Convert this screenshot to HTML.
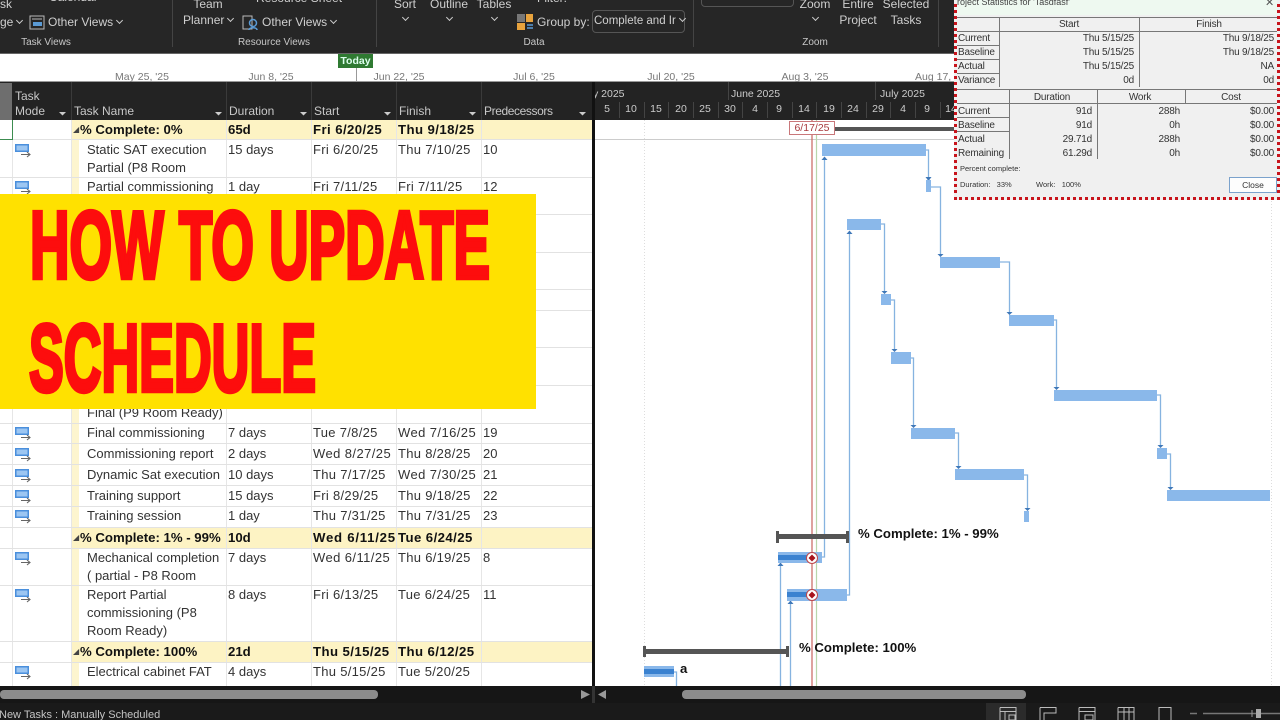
<!DOCTYPE html>
<html><head><meta charset="utf-8"><title>How to update schedule</title>
<style>
html,body{margin:0;padding:0;width:1280px;height:720px;overflow:hidden;background:#fff}
body{position:relative;font-family:"Liberation Sans",sans-serif;font-size:13px;color:#333;filter:blur(.35px)}
div{position:absolute;box-sizing:border-box}
.t{white-space:nowrap;line-height:18px;height:18px}
.c{transform:translateX(-50%)}
.r{color:#cfcfcf;font-size:12px}
.b{font-weight:bold;color:#111;font-size:13.2px}
.d{letter-spacing:.3px}
.k{letter-spacing:.42px}
.w{letter-spacing:.75px}
.h{color:#c8c8c8;font-size:12px}
.f{color:#c8c8c8;font-size:10px}
.l{left:0;width:592px;height:1px;background:#e2e2e2}
.v{width:1px;background:#e6e6e6;top:120px;height:566px}
.y{left:72px;width:520px;background:#fdf3c4}
.s{font-size:10px;letter-spacing:-.2px;color:#333;text-align:right;line-height:14px;height:14px;white-space:nowrap}
.g{color:#777;font-size:10.5px}
.n{color:#ccc;font-size:10.5px}
i.cv{display:inline-block;width:4px;height:4px;border-right:1px solid #ccc;border-bottom:1px solid #ccc;transform:rotate(45deg);margin:0 0 3px 4px}
</style></head><body>
<svg width="0" height="0" style="position:absolute"><defs>
<symbol id="m" viewBox="0 0 16 14"><rect x="0" y="0" width="14" height="8" fill="#4a8fdc"/><rect x="1.500" y="1.500" width="11" height="5" fill="#9cc6f2"/><path d="M6 10.500H15M12 8l3 2.500-3 2.500" fill="none" stroke="#666" stroke-width="1.100"/></symbol>
</defs></svg>

<!-- ribbon -->
<div style="left:0;top:0;width:1280px;height:53px;background:#262626"></div>
<div style="left:0;top:53px;width:1280px;height:1px;background:#666"></div>
<div class="t r" style="left:0;top:-5px">sk</div>
<div class="t r" style="left:0;top:13px">ge<i class="cv"></i></div>
<div class="t r" style="left:49px;top:-12px">Calendar</div>
<svg style="position:absolute;left:29px;top:15px" width="16" height="15"><rect x="1" y="1" width="14" height="13" fill="none" stroke="#bbb"/><rect x="4" y="7" width="9" height="4" fill="#5b9bd5"/><path d="M3 4H13" stroke="#bbb"/></svg>
<div class="t r" style="left:48px;top:13px">Other Views<i class="cv"></i></div>
<div class="t f c" style="left:46px;top:34px">Task Views</div>
<div style="left:172px;top:0;width:1px;height:47px;background:#444"></div>
<div class="t r c" style="left:208px;top:-5px">Team</div>
<div class="t r" style="left:183px;top:11px">Planner<i class="cv"></i></div>
<div class="t r" style="left:256px;top:-11px">Resource Sheet</div>
<svg style="position:absolute;left:242px;top:15px" width="17" height="16"><rect x="1" y="1" width="9" height="13" fill="none" stroke="#bbb"/><circle cx="11" cy="8" r="3.500" fill="none" stroke="#5b9bd5" stroke-width="1.500"/><path d="M7 15c0-3 8-3 8 0" fill="none" stroke="#5b9bd5" stroke-width="1.500"/></svg>
<div class="t r" style="left:262px;top:13px">Other Views<i class="cv"></i></div>
<div class="t f c" style="left:274px;top:34px">Resource Views</div>
<div style="left:376px;top:0;width:1px;height:47px;background:#444"></div>
<div class="t r c" style="left:405px;top:-5px">Sort</div><div class="t r" style="left:399px;top:10px"><i class="cv"></i></div>
<div class="t r c" style="left:449px;top:-5px">Outline</div><div class="t r" style="left:443px;top:10px"><i class="cv"></i></div>
<div class="t r c" style="left:494px;top:-5px">Tables</div><div class="t r" style="left:488px;top:10px"><i class="cv"></i></div>
<div class="t r" style="left:537px;top:-11px">Filter:</div>
<svg style="position:absolute;left:517px;top:14px" width="17" height="17"><rect x="0" y="0" width="8" height="8" fill="#777"/><rect x="9" y="0" width="7" height="8" fill="#e8a33d"/><rect x="0" y="9" width="8" height="7" fill="#e8a33d"/><path d="M10 11H16M10 14H16" stroke="#5b9bd5" stroke-width="1.500"/></svg>
<div class="t r" style="left:537px;top:13px">Group by:</div>
<div style="left:592px;top:10px;width:93px;height:23px;border:1px solid #555;border-radius:4px"></div>
<div class="t r" style="left:594px;top:12px;font-size:11.500px">Complete and Ir<i class="cv"></i></div>
<div style="left:701px;top:-10px;width:93px;height:17px;border:1px solid #555;border-radius:4px"></div>
<div style="left:693px;top:0;width:1px;height:47px;background:#444"></div>
<div class="t f c" style="left:534px;top:34px">Data</div>
<div class="t r c" style="left:815px;top:-5px">Zoom</div><div class="t r" style="left:809px;top:10px"><i class="cv"></i></div>
<div class="t r c" style="left:858px;top:-5px">Entire</div><div class="t r c" style="left:858px;top:11px">Project</div>
<div class="t r c" style="left:906px;top:-5px">Selected</div><div class="t r c" style="left:906px;top:11px">Tasks</div>
<div class="t f c" style="left:815px;top:34px">Zoom</div>
<div style="left:938px;top:0;width:1px;height:47px;background:#444"></div>

<!-- timeline -->
<div style="left:0;top:54px;width:1280px;height:28px;background:#fff"></div>
<div style="left:0;top:81px;width:1280px;height:1px;background:#999"></div>
<div style="left:356px;top:68px;width:1px;height:14px;background:#999"></div>
<div style="left:338px;top:54px;width:35px;height:14px;background:#2f7a32;color:#dfe;font-size:10.500px;font-weight:bold;text-align:center;line-height:14px">Today</div>
<div class="t g c" style="left:142px;top:68px">May 25, '25</div>
<div class="t g c" style="left:271px;top:68px">Jun 8, '25</div>
<div class="t g c" style="left:399px;top:68px">Jun 22, '25</div>
<div class="t g c" style="left:534px;top:68px">Jul 6, '25</div>
<div class="t g c" style="left:671px;top:68px">Jul 20, '25</div>
<div class="t g c" style="left:805px;top:68px">Aug 3, '25</div>
<div class="t g" style="left:915px;top:68px">Aug 17,</div>

<!-- table header -->
<div style="left:0;top:82px;width:1280px;height:38px;background:#232323"></div>
<div style="left:0;top:83px;width:12px;height:37px;background:#6e6e6e"></div>
<div class="t h" style="left:15px;top:87px">Task</div>
<div class="t h" style="left:15px;top:102px">Mode</div>
<div class="t h" style="left:74px;top:102px">Task Name</div>
<div class="t h" style="left:229px;top:102px">Duration</div>
<div class="t h" style="left:314px;top:102px">Start</div>
<div class="t h" style="left:399px;top:102px">Finish</div>
<div class="t h" style="left:484px;top:102px;letter-spacing:-.4px">Predecessors</div>
<svg style="position:absolute;left:0;top:82px" width="595" height="38"><g fill="#ccc"><path d="M59 30h7l-3.500 3.500zM215 30h7l-3.500 3.500zM300 30h7l-3.500 3.500zM384 30h7l-3.500 3.500zM469 30h7l-3.500 3.500zM579 30h7l-3.500 3.500z"/></g><g stroke="#3a3a3a"><path d="M71.500 0V38M226.500 0V38M311.500 0V38M396.500 0V38M481.500 0V38"/></g></svg>

<!-- gantt header -->
<div class="t n" style="left:593px;top:85px">y 2025</div>
<div class="t n" style="left:731px;top:85px">June 2025</div>
<div class="t n" style="left:880px;top:85px">July 2025</div>
<svg style="position:absolute;left:595px;top:82px" width="360" height="38"><g stroke="#444"><path d="M133.500 0V18M280.500 0V18M24.500 20V36M49.500 20V36M73.500 20V36M98.500 20V36M123.500 20V36M147.500 20V36M172.500 20V36M197.500 20V36M221.500 20V36M246.500 20V36M271.500 20V36M295.500 20V36M320.500 20V36M345.500 20V36"/></g></svg>
<div class="t n c" style="left:607px;top:100px">5</div><div class="t n c" style="left:631px;top:100px">10</div><div class="t n c" style="left:656px;top:100px">15</div><div class="t n c" style="left:681px;top:100px">20</div><div class="t n c" style="left:705px;top:100px">25</div><div class="t n c" style="left:730px;top:100px">30</div><div class="t n c" style="left:755px;top:100px">4</div><div class="t n c" style="left:779px;top:100px">9</div><div class="t n c" style="left:804px;top:100px">14</div><div class="t n c" style="left:829px;top:100px">19</div><div class="t n c" style="left:853px;top:100px">24</div><div class="t n c" style="left:878px;top:100px">29</div><div class="t n c" style="left:903px;top:100px">4</div><div class="t n c" style="left:927px;top:100px">9</div><div class="t n c" style="left:951px;top:100px">14</div>

<!-- table grid -->
<div class="y" style="top:120px;height:19px"></div>
<div class="y" style="top:527px;height:21px"></div>
<div class="y" style="top:641px;height:21px"></div>
<div style="left:72px;top:139px;width:7px;height:388px;background:#fdf5cf"></div>
<div style="left:72px;top:548px;width:7px;height:93px;background:#fdf5cf"></div>
<div style="left:72px;top:662px;width:7px;height:24px;background:#fdf5cf"></div>
<div class="v" style="left:12px"></div><div class="v" style="left:71px"></div><div class="v" style="left:226px"></div><div class="v" style="left:311px"></div><div class="v" style="left:396px"></div><div class="v" style="left:481px"></div>
<div class="l" style="top:139px"></div><div class="l" style="top:177px"></div><div class="l" style="top:214px"></div><div class="l" style="top:252px"></div><div class="l" style="top:289px"></div><div class="l" style="top:310px"></div><div class="l" style="top:347px"></div><div class="l" style="top:385px"></div><div class="l" style="top:423px"></div><div class="l" style="top:443px"></div><div class="l" style="top:464px"></div><div class="l" style="top:485px"></div><div class="l" style="top:506px"></div><div class="l" style="top:527px"></div><div class="l" style="top:548px"></div><div class="l" style="top:585px"></div><div class="l" style="top:641px"></div><div class="l" style="top:662px"></div>
<div style="left:0;top:120px;width:13px;height:20px;border-right:1px solid #3c8c50;border-bottom:1px solid #3c8c50"></div>
<div style="left:592px;top:82px;width:3px;height:621px;background:#111"></div>

<!-- rows -->
<div class="t" style="left:73px;top:121px;font-size:8px;color:#444">◢</div>
<div class="t b" style="left:80px;top:121px">% Complete: 0%</div><div class="t b" style="left:228px;top:121px">65d</div><div class="t b k" style="left:313px;top:121px">Fri 6/20/25</div><div class="t b k" style="left:398px;top:121px">Thu 9/18/25</div>
<svg style="position:absolute;left:15px;top:144px" width="16" height="14"><use href="#m"/></svg>
<div class="t" style="left:87px;top:141px">Static SAT execution</div><div class="t" style="left:87px;top:159px">Partial (P8 Room</div><div class="t" style="left:228px;top:141px">15 days</div><div class="t d" style="left:313px;top:141px">Fri 6/20/25</div><div class="t d" style="left:398px;top:141px">Thu 7/10/25</div><div class="t" style="left:483px;top:141px">10</div>
<svg style="position:absolute;left:15px;top:181px" width="16" height="14"><use href="#m"/></svg>
<div class="t" style="left:87px;top:178px">Partial commissioning</div><div class="t" style="left:228px;top:178px">1 day</div><div class="t d" style="left:313px;top:178px">Fri 7/11/25</div><div class="t d" style="left:398px;top:178px">Fri 7/11/25</div><div class="t" style="left:483px;top:178px">12</div>
<div class="t" style="left:87px;top:404px">Final (P9 Room Ready)</div>

<svg style="position:absolute;left:15px;top:427px" width="16" height="14"><use href="#m"/></svg>
<div class="t" style="left:87px;top:424px">Final commissioning</div><div class="t" style="left:228px;top:424px">7 days</div><div class="t d" style="left:313px;top:424px">Tue 7/8/25</div><div class="t k" style="left:398px;top:424px">Wed 7/16/25</div><div class="t" style="left:483px;top:424px">19</div>
<svg style="position:absolute;left:15px;top:448px" width="16" height="14"><use href="#m"/></svg>
<div class="t" style="left:87px;top:445px">Commissioning report</div><div class="t" style="left:228px;top:445px">2 days</div><div class="t k" style="left:313px;top:445px">Wed 8/27/25</div><div class="t d" style="left:398px;top:445px">Thu 8/28/25</div><div class="t" style="left:483px;top:445px">20</div>
<svg style="position:absolute;left:15px;top:469px" width="16" height="14"><use href="#m"/></svg>
<div class="t" style="left:87px;top:466px">Dynamic Sat execution</div><div class="t" style="left:228px;top:466px">10 days</div><div class="t d" style="left:313px;top:466px">Thu 7/17/25</div><div class="t k" style="left:398px;top:466px">Wed 7/30/25</div><div class="t" style="left:483px;top:466px">21</div>
<svg style="position:absolute;left:15px;top:490px" width="16" height="14"><use href="#m"/></svg>
<div class="t" style="left:87px;top:487px">Training support</div><div class="t" style="left:228px;top:487px">15 days</div><div class="t d" style="left:313px;top:487px">Fri 8/29/25</div><div class="t d" style="left:398px;top:487px">Thu 9/18/25</div><div class="t" style="left:483px;top:487px">22</div>
<svg style="position:absolute;left:15px;top:510px" width="16" height="14"><use href="#m"/></svg>
<div class="t" style="left:87px;top:507px">Training session</div><div class="t" style="left:228px;top:507px">1 day</div><div class="t d" style="left:313px;top:507px">Thu 7/31/25</div><div class="t d" style="left:398px;top:507px">Thu 7/31/25</div><div class="t" style="left:483px;top:507px">23</div>
<div class="t" style="left:73px;top:529px;font-size:8px;color:#444">◢</div>
<div class="t b" style="left:80px;top:529px">% Complete: 1% - 99%</div><div class="t b" style="left:228px;top:529px">10d</div><div class="t b w" style="left:313px;top:529px">Wed 6/11/25</div><div class="t b k" style="left:398px;top:529px">Tue 6/24/25</div>
<svg style="position:absolute;left:15px;top:552px" width="16" height="14"><use href="#m"/></svg>
<div class="t" style="left:87px;top:549px">Mechanical completion</div><div class="t" style="left:87px;top:567px">( partial - P8 Room</div><div class="t" style="left:228px;top:549px">7 days</div><div class="t k" style="left:313px;top:549px">Wed 6/11/25</div><div class="t d" style="left:398px;top:549px">Thu 6/19/25</div><div class="t" style="left:483px;top:549px">8</div>
<svg style="position:absolute;left:15px;top:589px" width="16" height="14"><use href="#m"/></svg>
<div class="t" style="left:87px;top:586px">Report Partial</div><div class="t" style="left:87px;top:604px">commissioning (P8</div><div class="t" style="left:87px;top:622px">Room Ready)</div><div class="t" style="left:228px;top:586px">8 days</div><div class="t d" style="left:313px;top:586px">Fri 6/13/25</div><div class="t d" style="left:398px;top:586px">Tue 6/24/25</div><div class="t" style="left:483px;top:586px">11</div>
<div class="t" style="left:73px;top:643px;font-size:8px;color:#444">◢</div>
<div class="t b" style="left:80px;top:643px">% Complete: 100%</div><div class="t b" style="left:228px;top:643px">21d</div><div class="t b k" style="left:313px;top:643px">Thu 5/15/25</div><div class="t b k" style="left:398px;top:643px">Thu 6/12/25</div>
<svg style="position:absolute;left:15px;top:666px" width="16" height="14"><use href="#m"/></svg>
<div class="t" style="left:87px;top:663px">Electrical cabinet FAT</div><div class="t" style="left:228px;top:663px">4 days</div><div class="t d" style="left:313px;top:663px">Thu 5/15/25</div><div class="t d" style="left:398px;top:663px">Tue 5/20/25</div>

<!-- gantt -->
<svg style="position:absolute;left:0;top:0" width="1280" height="720">
<g stroke="#ddd" stroke-dasharray="1 2"><path d="M644.500 120V686M1271.500 120V686"/></g>
<path d="M595 139.500H1280" stroke="#ccc"/>
<path d="M812 120V686" stroke="#c9655f" stroke-width="1.200"/>
<path d="M816.500 120V686" stroke="#b9d6ac" stroke-width="1.200"/>
<g fill="none" stroke="#86b3e0" stroke-width="1.300">
<path d="M926 150H928.500V178M931 187H940.500V254M881 224H884.500V291M1000 262H1009.500V312M891 300H894.500V349M1054 320H1056.500V387M911 358H913.500V425M1157 395H1160.500V445M955 433H958.500V466M1167 454H1170.500V487M1024 475H1027.500V508"/>
<path d="M822 557H824.500V158M847 595H849.500V233M780.500 686V566M790.500 686V604M674 672H676.500V686"/>
</g>
<g fill="#3f78b8">
<path d="M925.500 177h6l-3 4zM937.500 254h6l-3 3zM881.500 291h6l-3 3zM1006.500 312h6l-3 3zM891.500 349h6l-3 3zM1053.500 387h6l-3 3zM910.500 425h6l-3 3zM1157.500 445h6l-3 3zM955.500 466h6l-3 3zM1167.500 487h6l-3 3zM1024.500 508h6l-3 3z"/>
<path d="M821.500 160h6l-3-3.500zM846.500 234h6l-3-3.500zM777.500 566h6l-3-3.500zM787.500 604h6l-3-3.500z"/>
</g>
<g fill="#8ab8ea">
<rect x="822" y="144" width="104" height="12"/><rect x="926" y="180" width="5" height="12"/><rect x="847" y="219" width="34" height="11"/><rect x="940" y="257" width="60" height="11"/><rect x="881" y="294" width="10" height="11"/><rect x="1009" y="315" width="45" height="11"/><rect x="891" y="352" width="20" height="12"/><rect x="1054" y="390" width="103" height="11"/><rect x="911" y="428" width="44" height="11"/><rect x="1157" y="448" width="10" height="11"/><rect x="955" y="469" width="69" height="11"/><rect x="1167" y="490" width="103" height="11"/><rect x="1024" y="511" width="5" height="11"/>
<rect x="778" y="552" width="44" height="11"/><rect x="787" y="589" width="60" height="12"/><rect x="644" y="666" width="30" height="11"/>
</g>
<g fill="#3b82d0"><rect x="778" y="555" width="30" height="5"/><rect x="787" y="592" width="21" height="5"/><rect x="644" y="669" width="30" height="5"/></g>
<g fill="#fff" stroke="#c0474a"><circle cx="812" cy="558" r="5.500"/><circle cx="812" cy="595" r="5.500"/></g>
<g fill="#a8131c"><path d="M812 554.500l3.500 3.500-3.500 3.500-3.500-3.500zM812 591.500l3.500 3.500-3.500 3.500-3.500-3.500z"/></g>
<g fill="#555"><rect x="835" y="127" width="120" height="4"/><rect x="777" y="534" width="70" height="5"/><rect x="776" y="531" width="3" height="12"/><rect x="846" y="531" width="3" height="12"/><rect x="644" y="649" width="144" height="5"/><rect x="643" y="646" width="3" height="11"/><rect x="786" y="646" width="3" height="11"/></g>
</svg>
<div style="left:789px;top:121px;width:46px;height:14px;background:#fff;border:1px solid #c9777a;color:#a83a3e;font-size:10.500px;text-align:center;line-height:13px">6/17/25</div>
<div class="t b" style="left:858px;top:525px">% Complete: 1% - 99%</div>
<div class="t b" style="left:799px;top:639px">% Complete: 100%</div>
<div class="t b" style="left:680px;top:660px">a</div>

<!-- dialog -->
<div style="left:954px;top:-3px;width:326px;height:203px;background:#f0f0f0;border:3px dotted #c8141c"></div>
<div style="left:957px;top:0;width:320px;height:15px;background:#eef9f0"></div>
<div class="t" style="left:957px;top:-7px;font-size:9px;color:#444;width:120px;overflow:hidden">roject Statistics for 'Tasdfasf'</div>
<div class="t" style="left:1265px;top:-6px;font-size:11px;color:#555">✕</div>
<svg style="position:absolute;left:957px;top:0" width="320" height="165"><g stroke="#777" fill="none"><path d="M0 17.500H320M0 31.500H320M0 45.500H42M0 59.500H42M0 73.500H42M42.500 17V87M182.500 17V87M0 89.500H320M0 103.500H320M0 117.500H52M0 131.500H52M52.500 89V159M140.500 89V159M228.500 89V103"/></g></svg>
<div class="s c" style="left:1069px;top:18px">Start</div><div class="s c" style="left:1209px;top:18px">Finish</div>
<div class="s" style="left:958px;top:32px">Current</div><div class="s" style="left:958px;top:46px">Baseline</div><div class="s" style="left:958px;top:60px">Actual</div><div class="s" style="left:958px;top:74px">Variance</div>
<div class="s" style="right:146px;top:32px">Thu 5/15/25</div><div class="s" style="right:146px;top:46px">Thu 5/15/25</div><div class="s" style="right:146px;top:60px">Thu 5/15/25</div><div class="s" style="right:146px;top:74px">0d</div>
<div class="s" style="right:6px;top:32px">Thu 9/18/25</div><div class="s" style="right:6px;top:46px">Thu 9/18/25</div><div class="s" style="right:6px;top:60px">NA</div><div class="s" style="right:6px;top:74px">0d</div>
<div class="s c" style="left:1052px;top:91px">Duration</div><div class="s c" style="left:1140px;top:91px">Work</div><div class="s c" style="left:1231px;top:91px">Cost</div>
<div class="s" style="left:958px;top:105px">Current</div><div class="s" style="left:958px;top:119px">Baseline</div><div class="s" style="left:958px;top:133px">Actual</div><div class="s" style="left:958px;top:147px">Remaining</div>
<div class="s" style="right:188px;top:105px">91d</div><div class="s" style="right:188px;top:119px">91d</div><div class="s" style="right:188px;top:133px">29.71d</div><div class="s" style="right:188px;top:147px">61.29d</div>
<div class="s" style="right:100px;top:105px">288h</div><div class="s" style="right:100px;top:119px">0h</div><div class="s" style="right:100px;top:133px">288h</div><div class="s" style="right:100px;top:147px">0h</div>
<div class="s" style="right:6px;top:105px">$0.00</div><div class="s" style="right:6px;top:119px">$0.00</div><div class="s" style="right:6px;top:133px">$0.00</div><div class="s" style="right:6px;top:147px">$0.00</div>
<div class="s" style="left:960px;top:162px;font-size:7.500px;letter-spacing:0">Percent complete:</div>
<div class="s" style="left:960px;top:178px;font-size:7.500px;letter-spacing:0">Duration:&nbsp;&nbsp; 33%</div>
<div class="s" style="left:1036px;top:178px;font-size:7.500px;letter-spacing:0">Work:&nbsp;&nbsp; 100%</div>
<div style="left:1229px;top:177px;width:48px;height:16px;background:#fdfdfd;border:1px solid #7ba2cc;font-size:8.500px;text-align:center;line-height:15px;color:#333">Close</div>

<!-- banner -->
<div style="left:0;top:194px;width:536px;height:215px;background:#ffe100"></div>
<svg style="position:absolute;left:0;top:194px" width="536" height="215">
<text x="30" y="84" font-family="Liberation Sans,sans-serif" font-weight="bold" font-size="96" fill="#fd0d0d" stroke="#fd0d0d" stroke-width="4.500" textLength="460" lengthAdjust="spacingAndGlyphs">HOW TO UPDATE</text>
<text x="29" y="197" font-family="Liberation Sans,sans-serif" font-weight="bold" font-size="96" fill="#fd0d0d" stroke="#fd0d0d" stroke-width="4.500" textLength="287" lengthAdjust="spacingAndGlyphs">SCHEDULE</text>
</svg>

<!-- scrollbars + status -->
<div style="left:0;top:686px;width:1280px;height:17px;background:#161616"></div>
<div style="left:592px;top:686px;width:3px;height:17px;background:#333"></div>
<div style="left:0;top:690px;width:378px;height:9px;background:#8c8c8c;border-radius:4px"></div>
<div style="left:682px;top:690px;width:344px;height:9px;background:#8c8c8c;border-radius:4px"></div>
<svg style="position:absolute;left:578px;top:686px" width="32" height="17"><path d="M3 4l9 4.500-9 4.500zM28 4l-8 4.500 8 4.500z" fill="#999"/></svg>
<div style="left:0;top:703px;width:1280px;height:17px;background:#1a1a1a"></div>
<div class="t" style="left:-1px;top:706px;font-size:11px;color:#c4c4c4">New Tasks : Manually Scheduled</div>
<div style="left:986px;top:703px;width:40px;height:17px;background:#2b2b2b"></div>
<svg style="position:absolute;left:995px;top:705px" width="285" height="15"><g fill="none" stroke="#bbb"><path d="M5 2.500H21V15M5 2.500V15M5 6.500H21M10 6.500V15M14 10h6v5h-6z"/><path d="M45 2.500H61V8H49V15M45 2.500V15"/><path d="M84 2.500H100V15M84 2.500V15M84 6.500H100M90 10h8v5h-8z"/><path d="M123 2.500H139V15M123 2.500V15M123 7H139M129 2.500V15M134 2.500V15"/><path d="M164 15V2.500H176V15"/></g><path d="M195 8.500H202M208 8.500H285" stroke="#777" stroke-width="1.500"/><path d="M257 5V12" stroke="#999"/><rect x="261" y="4" width="5" height="9" fill="#aaa"/></svg>
</body></html>
